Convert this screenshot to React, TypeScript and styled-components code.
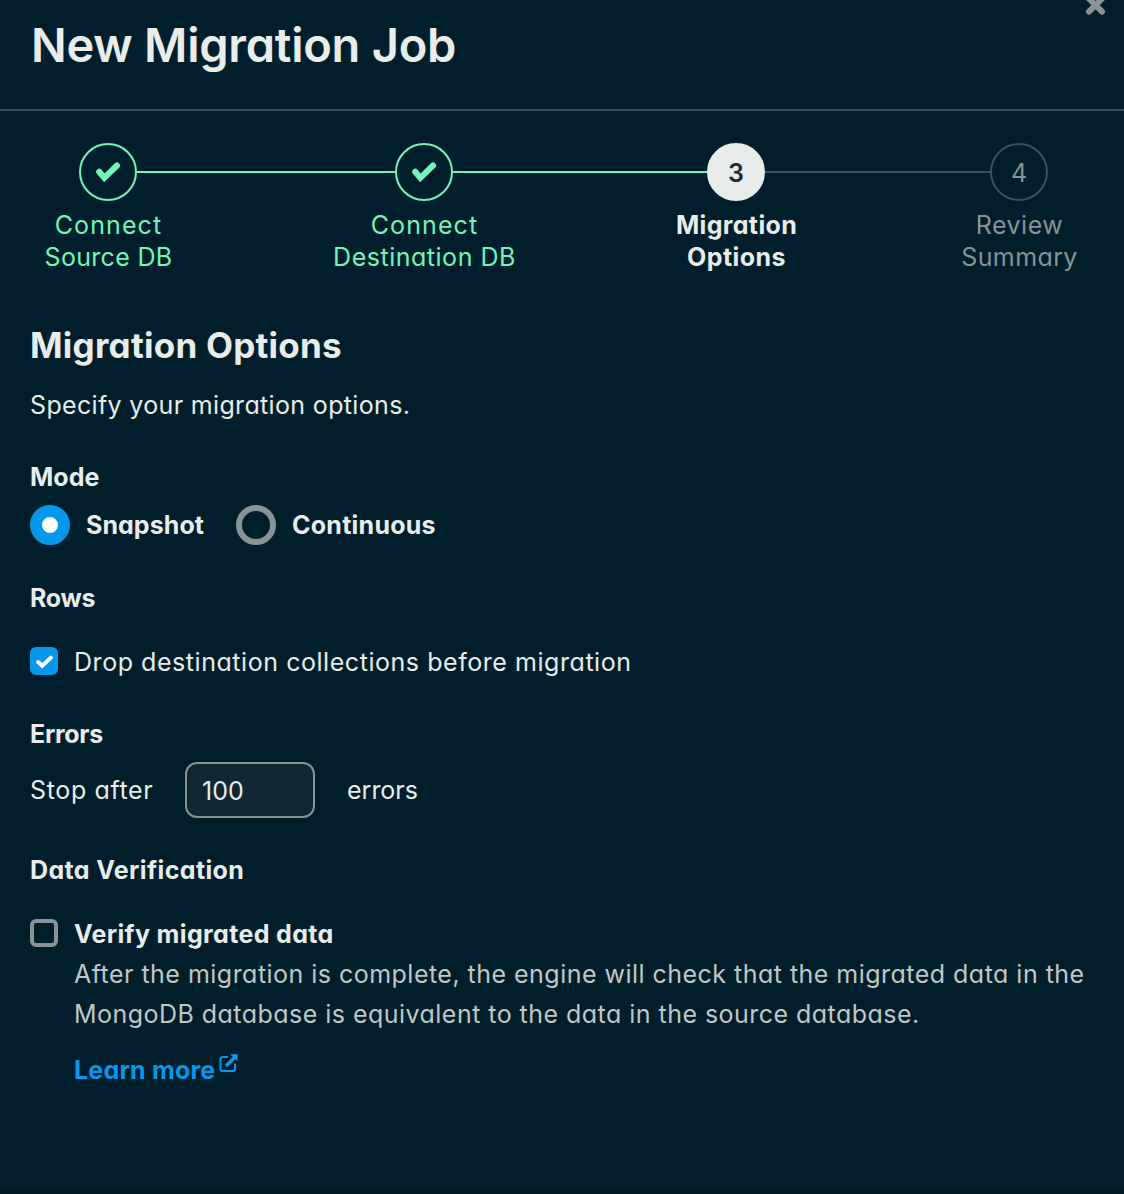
import React, { useState } from "react";
import styled, { createGlobalStyle } from "styled-components";

const color = {
  bg: "#001e2b",
  text: "#e8edeb",
  muted: "#c1c7c6",
  gray: "#889397",
  line: "#3d4f58",
  green: "#71f6ba",
  blue: "#0498ec",
  field: "#112733",
};

const GlobalStyle = createGlobalStyle`
  *, *::before, *::after { box-sizing: border-box; }
  body {
    margin: 0;
    background: ${color.bg};
    color: ${color.text};
    font: 400 25px/40px Inter, "Liberation Sans", sans-serif;
    font-feature-settings: "cv11";
  }
`;

const Panel = styled.div`
  position: relative;
  display: flex;
  flex-direction: column;
  height: 1194px;
  overflow: hidden;
  background: ${color.bg};
`;

const Header = styled.header`
  height: 111px;
  padding: 15px 31px 0;
  border-bottom: 2px solid ${color.line};
`;

const Title = styled.h1`
  margin: 0;
  font-size: 47px;
  font-weight: 600;
  line-height: 60px;
  letter-spacing: -0.25px;
`;

const CloseButton = styled.button`
  position: absolute;
  top: -7px;
  right: 16px;
  display: flex;
  padding: 0;
  border: 0;
  background: none;
  color: ${color.gray};
`;

const Spaced = styled.span<{ $ls?: number }>`
  letter-spacing: ${(p) => p.$ls ?? 0}px;
`;

type StepState = "done" | "current" | "upcoming";

const Stepper = styled.div`
  display: flex;
  height: 130px;
  margin: 32px 76px 0 79px;
`;

const Step = styled.div<{ $state: StepState }>`
  display: flex;
  flex: none;
  width: 58px;
  flex-direction: column;
  align-items: center;
  gap: 8px;
  color: ${(p) =>
    p.$state === "done" ? color.green : p.$state === "current" ? color.text : color.gray};
  font-weight: ${(p) => (p.$state === "current" ? 700 : 400)};
`;

const StepCircle = styled.div<{ $state: StepState }>`
  display: flex;
  align-items: center;
  justify-content: center;
  width: 58px;
  height: 58px;
  padding-top: ${(p) => (p.$state === "done" ? 0 : 1)}px;
  border: 2px solid
    ${(p) =>
      p.$state === "done" ? color.green : p.$state === "current" ? color.text : color.line};
  border-radius: 50%;
  background: ${(p) => (p.$state === "current" ? color.text : "transparent")};
  color: ${(p) => (p.$state === "current" ? "#1c2d38" : "inherit")};
  font-weight: ${(p) => (p.$state === "current" ? 600 : 400)};
`;

const StepLabel = styled.div`
  display: flex;
  flex-direction: column;
  align-items: center;
  padding-left: 1px;
  line-height: 32px;
  white-space: nowrap;
`;

const Connector = styled.div<{ $done: boolean; $grow: number }>`
  flex: ${(p) => p.$grow} 1 0;
  height: 2px;
  margin-top: 28px;
  background: ${(p) => (p.$done ? color.green : color.line)};
`;

const Body = styled.main`
  display: flex;
  flex: 1;
  flex-direction: column;
  padding: 52px 30px 0;
`;

const SectionTitle = styled.h2`
  margin: 0;
  font-size: 35px;
  font-weight: 700;
  line-height: 40px;
  letter-spacing: 0.25px;
`;

const Intro = styled.p`
  margin: 20px 0 0;
  letter-spacing: 0.34px;
`;

const GroupTitle = styled.h3<{ $top?: number; $ls?: number }>`
  margin: ${(p) => p.$top ?? 36}px 0 0;
  font-size: 25px;
  font-weight: 700;
  line-height: 32px;
  letter-spacing: ${(p) => p.$ls ?? 0}px;
`;

const RadioRow = styled.div`
  display: flex;
  gap: 32px;
  margin-top: 12px;
`;

const RadioOption = styled.label`
  display: flex;
  gap: 16px;
  font-weight: 700;
`;

const RadioDot = styled.span<{ $checked: boolean }>`
  flex: none;
  width: 40px;
  height: 40px;
  border: ${(p) => (p.$checked ? `12px solid ${color.blue}` : `6px solid ${color.gray}`)};
  border-radius: 50%;
  background: ${(p) => (p.$checked ? "#fff" : "transparent")};
`;

const HiddenInput = styled.input`
  position: absolute;
  opacity: 0;
  pointer-events: none;
`;

const CheckRow = styled.label`
  display: flex;
  gap: 16px;
  margin-top: 28px;
`;

const CheckBox = styled.span<{ $checked: boolean }>`
  display: flex;
  flex: none;
  width: 28px;
  height: 28px;
  margin-top: 5px;
  border: ${(p) => (p.$checked ? "0" : `4px solid ${color.gray}`)};
  border-radius: 6px;
  background: ${(p) => (p.$checked ? color.blue : "transparent")};
`;

const CheckContent = styled.span`
  display: flex;
  flex-direction: column;
  align-items: flex-start;
  white-space: nowrap;
`;

const CheckTitle = styled.strong`
  font-weight: 700;
  letter-spacing: 0.36px;
`;

const Description = styled.span`
  display: flex;
  flex-direction: column;
  color: ${color.muted};
`;

const LearnMore = styled.a`
  display: flex;
  gap: 4px;
  margin-top: 16px;
  color: ${color.blue};
  font-weight: 700;
  letter-spacing: 0.22px;
  text-decoration: none;
  svg {
    margin-top: 4px;
  }
`;

const ErrorRow = styled.div`
  display: flex;
  align-items: center;
  margin-top: 12px;
`;

const ErrorPrefix = styled.span`
  flex: 0 0 155px;
  letter-spacing: 0.64px;
`;

const NumberField = styled.input`
  width: 130px;
  height: 56px;
  margin-right: 32px;
  padding: 2px 14px 0 15px;
  border: 2px solid ${color.gray};
  border-radius: 12px;
  outline: 0;
  background: ${color.field};
  color: ${color.text};
  font: inherit;
  font-feature-settings: inherit;
`;

const FooterEdge = styled.div`
  height: 4px;
  background: #001a26;
`;

const StepCheck = () => (
  <svg width="28" height="28" viewBox="0 0 28 28" fill="none">
    <path
      d="M5.2 13.8 10.3 19.8 23 7.5"
      stroke="currentColor"
      strokeWidth="6"
      strokeLinecap="round"
      strokeLinejoin="miter"
    />
  </svg>
);

const BoxCheck = () => (
  <svg width="28" height="28" viewBox="0 0 28 28" fill="none">
    <path
      d="M8 15 12.2 18.8 20.9 10.7"
      stroke="#fff"
      strokeWidth="4"
      strokeLinecap="round"
      strokeLinejoin="miter"
    />
  </svg>
);

const CloseIcon = () => (
  <svg width="25" height="25" viewBox="0 0 25 25" fill="none">
    <path
      d="M6 5.7 19 18.7M19 5.7 6 18.7"
      stroke="currentColor"
      strokeWidth="6"
      strokeLinecap="round"
    />
  </svg>
);

const ExternalIcon = () => (
  <svg width="19" height="19" viewBox="0 0 19 19" fill="none">
    <path
      d="M9 3H3.5A2 2 0 0 0 1.5 5v10a2 2 0 0 0 2 2H14a2 2 0 0 0 2-2V9.5"
      stroke="currentColor"
      strokeWidth="2"
    />
    <path d="M8 11 15 4" stroke="currentColor" strokeWidth="3.6" strokeLinecap="round" />
    <path d="M11 0.2H18.6V7.6Z" fill="currentColor" />
  </svg>
);

type Word = { text: string; ls: number };
const steps: { state: StepState; lines: Word[]; next?: number }[] = [
  { state: "done", lines: [{ text: "Connect", ls: 1.1 }, { text: "Source DB", ls: 0.3 }], next: 258 },
  { state: "done", lines: [{ text: "Connect", ls: 1.1 }, { text: "Destination DB", ls: 0.52 }], next: 254 },
  { state: "current", lines: [{ text: "Migration", ls: 0.36 }, { text: "Options", ls: 0.42 }], next: 225 },
  { state: "upcoming", lines: [{ text: "Review", ls: 0.5 }, { text: "Summary", ls: 0.4 }] },
];

export default function App() {
  const [mode, setMode] = useState("Snapshot");
  const [drop, setDrop] = useState(true);
  const [verify, setVerify] = useState(false);

  return (
    <Panel>
      <GlobalStyle />
      <Header>
        <Title>New Migration Job</Title>
        <CloseButton aria-label="Close">
          <CloseIcon />
        </CloseButton>
      </Header>

      <Stepper>
        {steps.map((step, i) => (
          <React.Fragment key={i}>
            <Step $state={step.state}>
              <StepCircle $state={step.state}>
                {step.state === "done" ? <StepCheck /> : i + 1}
              </StepCircle>
              <StepLabel>
                {step.lines.map((line) => (
                  <Spaced key={line.text} $ls={line.ls}>
                    {line.text}
                  </Spaced>
                ))}
              </StepLabel>
            </Step>
            {step.next && <Connector $done={step.state === "done"} $grow={step.next} />}
          </React.Fragment>
        ))}
      </Stepper>

      <Body>
        <SectionTitle>Migration Options</SectionTitle>
        <Intro>Specify your migration options.</Intro>

        <GroupTitle $ls={0.05}>Mode</GroupTitle>
        <RadioRow>
          {[
            { name: "Snapshot", ls: 0.06 },
            { name: "Continuous", ls: 0.25 },
          ].map(({ name, ls }) => (
            <RadioOption key={name}>
              <HiddenInput
                type="radio"
                name="mode"
                checked={mode === name}
                onChange={() => setMode(name)}
              />
              <RadioDot $checked={mode === name} />
              <Spaced $ls={ls}>{name}</Spaced>
            </RadioOption>
          ))}
        </RadioRow>

        <GroupTitle $top={37} $ls={-0.3}>Rows</GroupTitle>
        <CheckRow>
          <HiddenInput type="checkbox" checked={drop} onChange={() => setDrop(!drop)} />
          <CheckBox $checked={drop}>{drop && <BoxCheck />}</CheckBox>
          <Spaced $ls={0.55}>Drop destination collections before migration</Spaced>
        </CheckRow>

        <GroupTitle $ls={-0.3}>Errors</GroupTitle>
        <ErrorRow>
          <ErrorPrefix>Stop after</ErrorPrefix>
          <NumberField defaultValue="100" />
          <Spaced $ls={0}>errors</Spaced>
        </ErrorRow>

        <GroupTitle $ls={0.38}>Data Verification</GroupTitle>
        <CheckRow>
          <HiddenInput type="checkbox" checked={verify} onChange={() => setVerify(!verify)} />
          <CheckBox $checked={verify}>{verify && <BoxCheck />}</CheckBox>
          <CheckContent>
            <CheckTitle>Verify migrated data</CheckTitle>
            <Description>
              <Spaced $ls={0.475}>
                After the migration is complete, the engine will check that the migrated data in the
              </Spaced>
              <Spaced $ls={0.465}>
                MongoDB database is equivalent to the data in the source database.
              </Spaced>
            </Description>
            <LearnMore href="#">
              Learn more
              <ExternalIcon />
            </LearnMore>
          </CheckContent>
        </CheckRow>
      </Body>
      <FooterEdge />
    </Panel>
  );
}
